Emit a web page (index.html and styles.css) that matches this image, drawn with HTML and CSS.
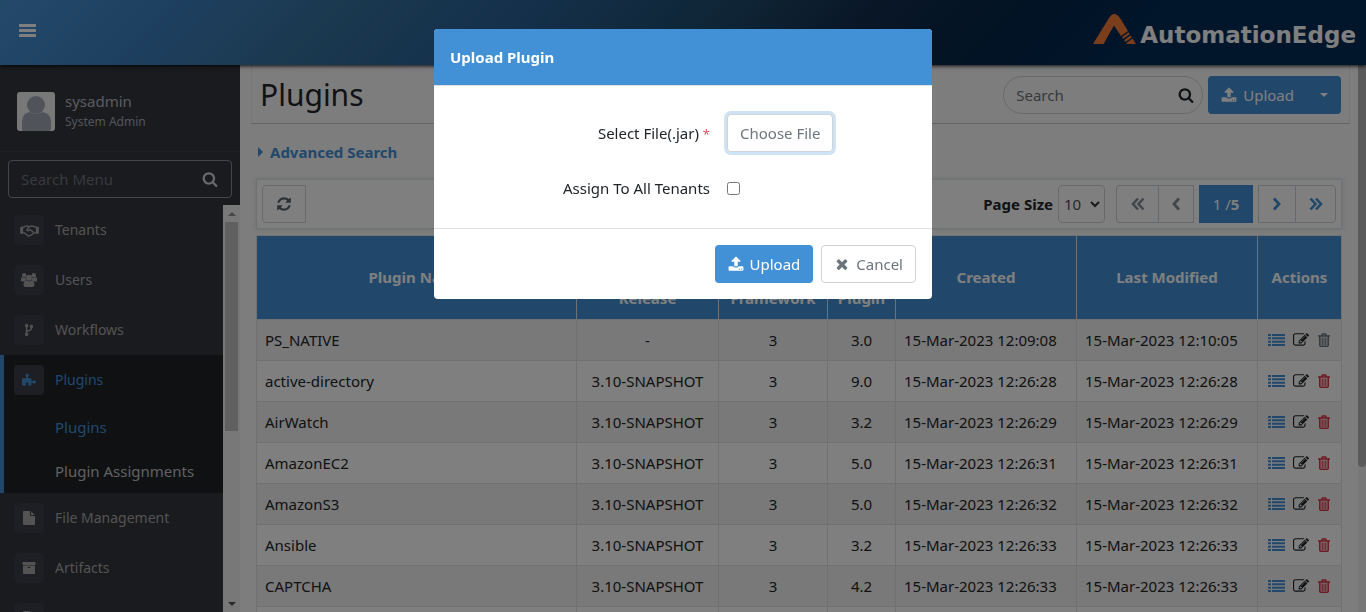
FILE: index.html
```html
<!DOCTYPE html>
<html lang="en">
<head>
<meta charset="utf-8">
<title>Plugins</title>
<link rel="stylesheet" href="styles.css">
</head>
<body>
<svg class="sprite" aria-hidden="true">
  <symbol id="i-search" viewBox="0 0 1792 1792"><path d="M1216 832q0-185-131.500-316.500t-316.500-131.500-316.500 131.500-131.500 316.500 131.500 316.500 316.500 131.500 316.500-131.500 131.500-316.500zm512 832q0 52-38 90t-90 38q-54 0-90-38l-343-342q-179 124-399 124-143 0-273.500-55.500t-225-150-150-225-55.500-273.500 55.500-273.500 150-225 225-150 273.500-55.500 273.500 55.500 225 150 150 225 55.500 273.500q0 220-124 399l343 343q37 37 37 90z"/></symbol>
  <symbol id="i-refresh" viewBox="0 0 1792 1792"><path d="M1639 1056q0 5-1 7-64 268-268 434.500t-478 166.500q-146 0-282.500-55t-243.500-157l-129 129q-19 19-45 19t-45-19-19-45v-448q0-26 19-45t45-19h448q26 0 45 19t19 45-19 45l-137 137q71 66 161 102t187 36q134 0 250-65t186-179q11-17 53-117 8-23 30-23h192q13 0 22.500 9.500t9.500 22.500zm25-800v448q0 26-19 45t-45 19h-448q-26 0-45-19t-19-45 19-45l138-138q-148-137-349-137-134 0-250 65t-186 179q-11 17-53 117-8 23-30 23h-199q-13 0-22.500-9.500t-9.500-22.500v-7q65-268 270-434.500t480-166.500q146 0 284 55.500t245 156.500l130-129q19-19 45-19t45 19 19 45z"/></symbol>
  <symbol id="i-upload" viewBox="0 0 1792 1792"><path d="M1344 1472q0-26-19-45t-45-19-45 19-19 45 19 45 45 19 45-19 19-45zm256 0q0-26-19-45t-45-19-45 19-19 45 19 45 45 19 45-19 19-45zm128-224v320q0 40-28 68t-68 28h-1472q-40 0-68-28t-28-68v-320q0-40 28-68t68-28h427q21 56 70.500 92t110.500 36h256q61 0 110.500-36t70.500-92h427q40 0 68 28t28 68zm-325-648q-17 40-59 40h-256v448q0 26-19 45t-45 19h-256q-26 0-45-19t-19-45v-448h-256q-42 0-59-40-17-39 14-69l448-448q18-19 45-19t45 19l448 448q31 30 14 69z"/></symbol>
  <symbol id="i-times" viewBox="0 0 1792 1792"><path d="M1490 1322q0 40-28 68l-136 136q-28 28-68 28t-68-28l-294-294-294 294q-28 28-68 28t-68-28l-136-136q-28-28-28-68t28-68l294-294-294-294q-28-28-28-68t28-68l136-136q28-28 68-28t68 28l294 294 294-294q28-28 68-28t68 28l136 136q28 28 28 68t-28 68l-294 294 294 294q28 28 28 68z"/></symbol>
  <symbol id="i-file" viewBox="0 0 1792 1792"><path d="M1152 512v-472q22 14 36 28l408 408q14 14 28 36h-472zm-128 32q0 40 28 68t68 28h544v1056q0 40-28 68t-68 28h-1344q-40 0-68-28t-28-68v-1600q0-40 28-68t68-28h800v544z"/></symbol>
  <symbol id="i-archive" viewBox="0 0 1792 1792"><path d="M1088 832q0-26-19-45t-45-19h-256q-26 0-45 19t-19 45 19 45 45 19h256q26 0 45-19t19-45zm576-192v960q0 26-19 45t-45 19h-1408q-26 0-45-19t-19-45v-960q0-26 19-45t45-19h1408q26 0 45 19t19 45zm64-448v256q0 26-19 45t-45 19h-1536q-26 0-45-19t-19-45v-256q0-26 19-45t45-19h1536q26 0 45 19t19 45z"/></symbol>
  <symbol id="i-edit" viewBox="0 0 1792 1792"><path d="M888 1184l116-116-152-152-116 116v56h96v96h56zm440-720q-16-16-33 1l-350 350q-17 17-1 33t33-1l350-350q17-17 1-33zm80 594v190q0 119-84.500 203.500t-203.500 84.500h-832q-119 0-203.500-84.500t-84.500-203.500v-832q0-119 84.500-203.500t203.500-84.500h832q63 0 117 25 15 7 18 23 3 17-9 29l-49 49q-14 14-32 8-23-6-45-6h-832q-66 0-113 47t-47 113v832q0 66 47 113t113 47h832q66 0 113-47t47-113v-126q0-13 9-22l64-64q15-15 35-7t20 29zm-96-738l288 288-672 672h-288v-288zm444 132l-92 92-288-288 92-92q28-28 68-28t68 28l152 152q28 28 28 68t-28 68z"/></symbol>
  <symbol id="i-list" viewBox="0 0 17 14"><path d="M0 1h3v2H0zM4 1h13v2H4zM0 4.300h3v2H0zM4 4.300h13v2H4zM0 7.700h3v2H0zM4 7.700h13v2H4zM0 11h3v2H0zM4 11h13v2H4z"/></symbol>
  <symbol id="i-trash" viewBox="0 0 14 16"><path fill="none" stroke="currentColor" stroke-width="1.600" d="M1 4h12M4.600 4l.8-2h3.200l.8 2M2.800 4v9.200q0 1 1 1h6.400q1 0 1-1V4"/><path d="M4.600 5.500h1.200v7.500H4.600zM6.500 5.500h1v7.500h-1zM8.200 5.500h1.200v7.500H8.200z"/></symbol>
  <symbol id="i-bars" viewBox="0 0 17 14"><rect width="17" height="3" rx=".5"/><rect y="5" width="17" height="3" rx=".5"/><rect y="10" width="17" height="3" rx=".5"/></symbol>
  <symbol id="i-users" viewBox="0 0 16 14"><circle cx="3.200" cy="2.300" r="2.200"/><circle cx="12.800" cy="2.300" r="2.200"/><path d="M0 8V6q0-2 1.300-2 .8.800 2 .8.900 0 1.500-.3-.2 1.800.8 2.900Q4 7.500 3 8.500H1Q0 8.500 0 8zM16 8V6q0-2-1.300-2-.8.800-2 .8-.9 0-1.500-.3.200 1.800-.8 2.900 1.600.1 2.600 1.100h2q1 0 1-.5z"/><circle cx="8" cy="4.800" r="3"/><path d="M5.600 7.400q1.200.9 2.400.9t2.400-.9Q13.500 7.400 13.500 12q0 2-2 2h-7q-2 0-2-2 0-4.600 3.100-4.600z"/></symbol>
  <symbol id="i-handshake" viewBox="0 0 20 14"><g fill="none" stroke="currentColor" stroke-width="1.500" stroke-linejoin="round"><path d="M3 3.500 6.500 2l3 .8L12.500 2 17 3.500M3 9.500h1.500l3.500 3q2 .9 3.500-.3l3.500-2.700h2M10 3 7.500 5.500q-.8 1.700.7 1.900 1.300 0 2.300-1.500L14.500 9"/></g><path d="M0 3h3.200v7.500H0zM16.800 3H20v7.500h-3.200z"/></symbol>
  <symbol id="i-fork" viewBox="0 0 10 14"><g fill="none" stroke="currentColor" stroke-width="1.700"><circle cx="2.200" cy="2" r="1.200"/><circle cx="2.200" cy="12" r="1.200"/><circle cx="7.800" cy="3" r="1.200"/><path d="M2.200 3.200v7.600M7.800 4.200Q8 7 5 7.700t-2.800 2.300"/></g></symbol>
  <symbol id="i-puzzle" viewBox="0 0 15 14"><path d="M0 5h4.600q.5-.6-.2-1.400Q3.600 2.400 4 1.500 4.500.3 5.800.4 7.300.5 7.400 2q0 .9-.7 1.700-.5.800.2 1.300H10v3q.8.700 1.500 0 1.500-1.200 2.700-.2 1.200 1.200.2 2.400-1.200 1.200-2.700 0-1-.7-1.700.2V13H6.700q-.5-.5 0-1.300.7-1-.3-1.700-1.200-.7-2.100 0-.8.700-.1 1.700.4.800-.1 1.300H0z"/></symbol>
  <symbol id="i-angle" viewBox="0 0 10 14"><path fill="none" stroke="currentColor" stroke-width="2.800" d="m2 1.500 5 5.500-5 5.500"/></symbol>
  <symbol id="i-angles" viewBox="0 0 14 14"><path fill="none" stroke="currentColor" stroke-width="2.600" d="m1.500 1.500 5 5.500-5 5.500M7 1.500 12 7l-5 5.500"/></symbol>
</svg>

<div class="app">
  <header class="topbar">
    <button class="burger" aria-label="Toggle menu"><svg class="ic-bars"><use href="#i-bars"/></svg></button>
    <div class="brand">
      <svg class="brand-mark" viewBox="0 0 43 30"><path fill="#f77d38" d="M0 30 16 4Q21-4 27 4l8 13-7 5-7-10.500L10.500 30zM29 23l6.500-4.800 1.200 2-6.500 4.600zM31.200 26l6.300-4.600 1.200 2-6.300 4.500zM33.400 29l6-4.400L43 30h-9z"/></svg>
      <span class="brand-name">AutomationEdge</span>
    </div>
  </header>

  <div class="shell">
    <aside class="sidebar">
      <div class="profile">
        <svg class="avatar" viewBox="0 0 38 39"><rect width="38" height="39" rx="3" fill="#f0f1f3"/><path fill="#a0a7b4" d="M5 39V30q0-9 8-10 6 4 12 0 9 1 9 10v6q0 3-3 3z"/><circle cx="19" cy="13" r="9" fill="#a0a7b4"/></svg>
        <div><div class="user">sysadmin</div><div class="role">System Admin</div></div>
      </div>
      <div class="menu-search">
        <input type="text" placeholder="Search Menu" aria-label="Search Menu">
        <svg class="ic"><use href="#i-search"/></svg>
      </div>
      <div class="menu-wrap">
        <nav class="menu">
          <a class="item" href="#"><span class="tile"><svg class="ic-hand"><use href="#i-handshake"/></svg></span>Tenants</a>
          <a class="item" href="#"><span class="tile"><svg class="ic"><use href="#i-users"/></svg></span>Users</a>
          <a class="item" href="#"><span class="tile"><svg class="ic-small"><use href="#i-fork"/></svg></span>Workflows</a>
          <div class="group">
            <a class="item current" href="#"><span class="tile"><svg class="ic-tile"><use href="#i-puzzle"/></svg></span>Plugins</a>
            <a class="sub current" href="#">Plugins</a>
            <a class="sub" href="#">Plugin Assignments</a>
          </div>
          <a class="item" href="#"><span class="tile"><svg class="ic-tile"><use href="#i-file"/></svg></span>File Management</a>
          <a class="item" href="#"><span class="tile"><svg class="ic-tile"><use href="#i-archive"/></svg></span>Artifacts</a>
          <a class="item" href="#" aria-label="More"><span class="tile"><svg class="ic-tile"><use href="#i-file"/></svg></span></a>
        </nav>
        <div class="menu-scroll"><span class="up"></span><span class="thumb"></span><span class="down"></span></div>
      </div>
    </aside>

    <main class="main">
      <div class="page-head">
        <h1>Plugins</h1>
        <div class="search"><input type="text" placeholder="Search" aria-label="Search"><svg class="ic"><use href="#i-search"/></svg></div>
        <button class="btn primary split"><svg class="ic"><use href="#i-upload"/></svg>Upload<span class="caret"></span></button>
      </div>
      <a class="advanced" href="#"><span class="tri"></span>Advanced Search</a>
      <div class="toolbar">
        <button class="refresh" aria-label="Refresh"><svg class="ic"><use href="#i-refresh"/></svg></button>
        <label class="size-label" for="size">Page Size</label>
        <select id="size" class="size"><option>10</option></select>
        <div class="pager">
          <button class="first off" aria-label="First"><svg class="ic-angles flip"><use href="#i-angles"/></svg></button>
          <button class="prev off" aria-label="Previous"><svg class="ic-angle flip"><use href="#i-angle"/></svg></button>
          <span class="page">1 /<b>5</b></span>
          <button class="next" aria-label="Next"><svg class="ic-angle"><use href="#i-angle"/></svg></button>
          <button class="last" aria-label="Last"><svg class="ic-angles"><use href="#i-angles"/></svg></button>
        </div>
      </div>
      <table class="grid">
        <colgroup><col><col class="c-release"><col class="c-frame"><col class="c-plugin"><col class="c-date"><col class="c-date"><col class="c-act"></colgroup>
        <thead><tr><th>Plugin Name</th><th class="low">Release</th><th class="low">Framework</th><th class="low">Plugin</th><th>Created</th><th>Last Modified</th><th>Actions</th></tr></thead>
        <tbody id="rows"></tbody>
      </table>
    </main>
    <div class="page-scroll"><span></span></div>
  </div>
</div>

<div class="backdrop">
  <form class="modal" role="dialog" aria-labelledby="modal-title">
    <div class="modal-head"><h2 id="modal-title">Upload Plugin</h2></div>
    <div class="modal-body">
      <label for="file">Select File(.jar) <span class="req">*</span></label>
      <div><button type="button" id="file" class="btn outline focused">Choose File</button></div>
      <label for="all">Assign To All Tenants</label>
      <div><input type="checkbox" id="all" class="check"></div>
    </div>
    <div class="modal-foot">
      <button type="button" class="btn primary"><svg class="ic"><use href="#i-upload"/></svg>Upload</button>
      <button type="button" class="btn outline"><svg class="ic"><use href="#i-times"/></svg>Cancel</button>
    </div>
  </form>
</div>
<script src="app.js"></script>
</body>
</html>
```

FILE: app.js
```js
const plugins = [
  ["PS_NATIVE", "-", "3", "3.0", "12:09:08", "12:10:05"],
  ["active-directory", "3.10-SNAPSHOT", "3", "9.0", "12:26:28", "12:26:28"],
  ["AirWatch", "3.10-SNAPSHOT", "3", "3.2", "12:26:29", "12:26:29"],
  ["AmazonEC2", "3.10-SNAPSHOT", "3", "5.0", "12:26:31", "12:26:31"],
  ["AmazonS3", "3.10-SNAPSHOT", "3", "5.0", "12:26:32", "12:26:32"],
  ["Ansible", "3.10-SNAPSHOT", "3", "3.2", "12:26:33", "12:26:33"],
  ["CAPTCHA", "3.10-SNAPSHOT", "3", "4.2", "12:26:33", "12:26:33"]
];
document.getElementById("rows").innerHTML = plugins.map(([name, rel, fw, ver, made, mod], i) => `
  <tr><td>${name}</td><td class="mid">${rel}</td><td class="mid">${fw}</td><td class="mid">${ver}</td>
  <td>15-Mar-2023 ${made}</td><td>15-Mar-2023 ${mod}</td>
  <td><div class="actions">
    <button class="a-list" aria-label="Details"><svg class="ic-list"><use href="#i-list"/></svg></button>
    <button class="a-edit" aria-label="Edit"><svg class="ic"><use href="#i-edit"/></svg></button>
    <button class="${i ? "a-del" : "a-del off"}" aria-label="Delete"><svg class="ic-trash"><use href="#i-trash"/></svg></button>
  </div></td></tr>`).join("") + '<tr class="last-row"><td></td><td></td><td></td><td></td><td></td><td></td><td></td></tr>';
```

FILE: styles.css
```css
* { box-sizing: border-box; }
html, body { height: 100%; }
body {
  margin: 0;
  overflow: hidden;
  font: 15px/24px "Segoe UI", "Noto Sans", sans-serif;
  color: #212529;
  background: #fafafa;
}
button, input, select { font: inherit; color: inherit; }
button { cursor: pointer; background: none; border: 0; padding: 0; }
a { text-decoration: none; color: inherit; }
svg { fill: currentColor; flex: none; display: block; }
.sprite { position: absolute; width: 0; height: 0; }

.ic { width: 16px; height: 16px; }
.ic-tile { width: 14px; height: 14px; }
.ic-small { width: 10px; height: 12px; }
.ic-hand { width: 19px; height: 13px; }
.ic-bars { width: 17px; height: 14px; }
.ic-list { width: 17px; height: 14px; }
.ic-trash { width: 14px; height: 16px; }
.ic-angle { width: 10px; height: 14px; }
.ic-angles { width: 14px; height: 14px; }
.flip { transform: scaleX(-1); }

.app { height: 100vh; display: flex; flex-direction: column; }
.topbar {
  flex: none;
  height: 65px;
  padding: 0 10px 0 19px;
  display: flex;
  align-items: center;
  justify-content: space-between;
  background: linear-gradient(135deg, #4893d4 0%, #3c80c2 12%, #36729e 24%, #2a6298 36%, #1e4a6c 52%, #122c4c 62%, #02264a 74%, #022b56 82%, #022a56 100%);
  box-shadow: 0 1px 4px rgba(0, 0, 0, .9);
  position: relative;
  z-index: 1;
}
.burger { color: #fff; padding-bottom: 4px; }
.brand { display: flex; align-items: flex-end; padding-bottom: 8px; gap: 4px; }
.brand-mark { width: 43px; height: 30px; }
.brand-name { color: #fff; font: bold 23px/18px "DejaVu Sans", sans-serif; }

.shell { flex: 1; min-height: 0; display: flex; }

.sidebar { width: 240px; flex: none; background: #34363e; display: flex; flex-direction: column; }
.profile {
  flex: none;
  height: 87px;
  padding: 6px 17px 0;
  display: flex;
  align-items: center;
  gap: 10px;
  border-bottom: 1px solid #41434b;
}
.avatar { width: 38px; height: 39px; }
.user { line-height: 22px; color: #b4b7bf; }
.role { font-size: 12px; line-height: 20px; color: #a4a8b4; }
.menu-search {
  flex: none;
  height: 38px;
  margin: 8px 8px 7px;
  padding: 0 13px 0 12px;
  display: flex;
  align-items: center;
  border: 1px solid #868b95;
  border-radius: 4px;
  color: #ced0d4;
}
.menu-search input { flex: 1; min-width: 0; border: 0; outline: 0; padding: 0; background: none; }
.menu-search input::placeholder { color: #6c757d; opacity: 1; }
.menu-wrap { flex: 1; min-height: 0; display: flex; }
.menu { flex: 1; overflow: hidden; color: #a7a7a7; }
.item { display: flex; align-items: center; height: 50px; padding-left: 14px; gap: 11px; font-size: 14px; }
.tile {
  width: 30px;
  height: 30px;
  display: flex;
  align-items: center;
  justify-content: center;
  background: #3c3e48;
  border-radius: 4px;
}
.group { background: #212326; border-left: 4px solid #4291d7; }
.group .item { padding-left: 10px; }
.sub { display: flex; align-items: center; height: 44px; padding-left: 51px; color: #bfc1c4; }
.menu .current { color: #4291d7; }
.menu-scroll { width: 17px; background: #f1f1f1; display: flex; flex-direction: column; align-items: center; }
.menu-scroll .up, .menu-scroll .down { border: 4px solid transparent; }
.menu-scroll .up { margin: 3px 0 6px; border-bottom-color: #8c8c8c; }
.menu-scroll .down { border-top-color: #505050; margin: auto 0 2px; }
.menu-scroll .thumb { width: 13px; height: 209px; background: #c1c1c1; }

.main { flex: 1; min-width: 0; padding: 0 8px 0 11px; overflow: hidden; }
.page-head {
  height: 59px;
  padding: 2px 8px 0;
  display: flex;
  align-items: center;
  gap: 5px;
  border: 1px solid #ececec;
  border-top: 0;
  border-bottom: 1px solid #c9c9c9;
}
h1 { margin: 0 auto 0 0; font-size: 30px; line-height: 38px; font-weight: 400; }
.search {
  width: 200px;
  height: 38px;
  padding: 0 8px 0 12px;
  display: flex;
  align-items: center;
  border: 1px solid #ced4da;
  border-radius: 19px;
}
.search input { flex: 1; min-width: 0; padding: 0; border: 0; outline: 0; background: none; }
.search input::placeholder { color: #6c757d; opacity: 1; }

.btn {
  height: 38px;
  padding: 0 12px;
  display: inline-flex;
  align-items: center;
  gap: 6px;
  border: 1px solid transparent;
  border-radius: 4px;
}
.primary { background: #4291d7; color: #fff; }
.outline { background: #fff; border-color: #ced4da; color: #6c757d; }
.caret { border: 4px solid transparent; border-top-color: #fff; border-bottom: 0; margin-left: 20px; }

.advanced { display: flex; align-items: center; gap: 7px; margin: 16px 7px 15px; color: #4291d7; font-weight: 700; }
.tri { border: 5px solid transparent; border-left-color: #4291d7; border-right: 0; }

.toolbar {
  height: 50px;
  margin: 0 8px 6px 5px;
  padding: 0 5px;
  display: flex;
  align-items: center;
  background: #fff;
  border: 1px solid #dee2e6;
  box-shadow: 0 0 4px #d3dae0;
}
.refresh {
  width: 44px;
  height: 38px;
  display: flex;
  align-items: center;
  justify-content: center;
  border: 1px solid #ced4da;
  border-radius: 4px 0 0 4px;
  color: #5a6268;
}
.size-label { margin: 0 5px 0 auto; font-weight: 700; }
.size {
  width: 47px;
  height: 38px;
  padding: 0 5px;
  appearance: none;
  border: 1px solid #ced4da;
  border-radius: 4px;
  color: #495057;
  background: url("data:image/svg+xml,%3Csvg xmlns='http://www.w3.org/2000/svg' width='10' height='7'%3E%3Cpath d='m1 1 4 4 4-4' fill='none' stroke='%23333' stroke-width='2'/%3E%3C/svg%3E") no-repeat right 4px center;
}
.pager { display: flex; margin-left: 11px; height: 38px; color: #4291d7; }
.pager button { display: flex; align-items: center; justify-content: center; border: 1px solid #ced4da; }
.pager .off { color: #868e96; }
.pager .first { width: 42px; border-radius: 4px 0 0 4px; border-right: 0; }
.pager .prev { width: 36px; }
.pager .page { width: 54px; margin: 0 5px; background: #4291d7; color: #fff; display: flex; align-items: center; justify-content: center; }
.pager .next { width: 37px; border-right: 0; }
.pager .last { width: 41px; border-radius: 0 4px 4px 0; }

.grid { width: calc(100% - 13px); margin: 0 8px 0 5px; border-collapse: collapse; table-layout: fixed; background: #fff; }
.c-release { width: 142px; }
.c-frame { width: 109px; }
.c-plugin { width: 68px; }
.c-date { width: 181px; }
.c-act { width: 84px; }
.grid th, .grid td { border: 1px solid #dee2e6; padding: 0 8px; white-space: nowrap; }
.grid th { height: 84px; background: #4291d7; color: #fff; line-height: 21px; }
.grid .low { vertical-align: bottom; padding: 0 0 10px; }
.grid td { height: 41px; }
.grid td.mid { text-align: center; }
.grid tbody tr:nth-child(odd) { background: #f2f2f2; }
.actions { display: flex; align-items: center; justify-content: center; gap: 8px; }
.a-list { color: #4291d7; }
.a-del { color: #dc3545; }
.a-del.off { color: #6c757d; }

.page-scroll { width: 8px; flex: none; background: #f1f1f1; }
.page-scroll span { display: block; height: 402px; background: #b4b4b4; border-radius: 0 0 4px 4px; }

.backdrop { position: fixed; inset: 0; z-index: 10; background: rgba(0, 0, 0, .5); }
.modal {
  max-width: 498px;
  margin: 29px auto;
  background: #fff;
  border-radius: 4px;
  overflow: hidden;
}
.modal-head { padding: 16px; border-bottom: 1px solid #dee2e6; background: #4291d7; color: #fff; }
.modal-head h2 { margin: 0; font-size: 15px; line-height: 24px; font-weight: 700; }
.modal-body {
  padding: 28px 16px;
  display: grid;
  grid-template-columns: 260px 1fr;
  align-items: center;
  row-gap: 24px;
  column-gap: 17px;
}
.modal-body label { text-align: right; }
.req { color: #e0505a; font-size: 13px; }
.focused { box-shadow: 0 0 0 3px #d0e3f5; outline: 0; }
.check { display: block; width: 13px; height: 13px; margin: 0; }
.modal-foot { display: flex; justify-content: flex-end; gap: 8px; padding: 16px; border-top: 1px solid #dee2e6; }
```
